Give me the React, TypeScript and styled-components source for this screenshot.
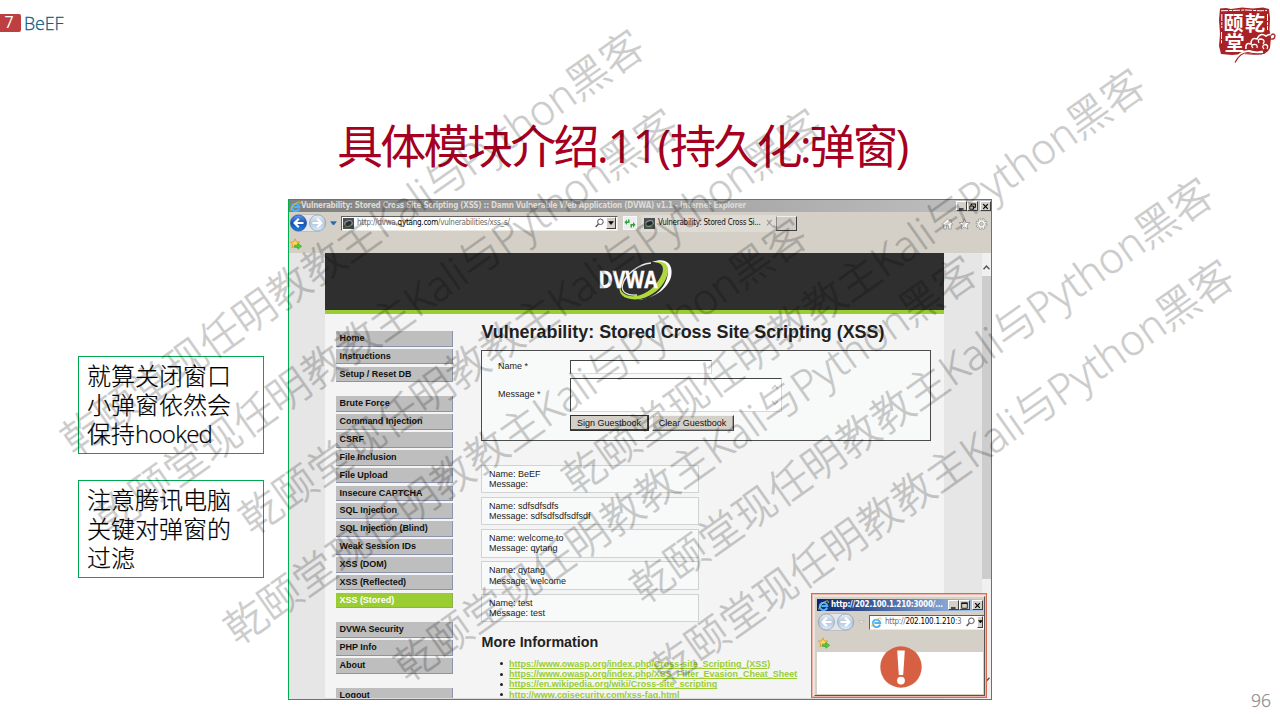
import React from 'react';
import styled, { createGlobalStyle, css } from 'styled-components';

const slideFont = `'Open Sans', 'Noto Sans CJK SC', sans-serif`;
const tahoma = `'DejaVu Sans Condensed', 'DejaVu Sans', sans-serif`;
const arial = `'Liberation Sans', Arial, sans-serif`;

const GlobalStyle = createGlobalStyle`
  *, *::before, *::after { box-sizing: border-box; }
  body { margin: 0; background: #fff; overflow: hidden; }
  h1, h2, p, ul { margin: 0; padding: 0; }
  svg { display: block; flex: none; }
`;

/* ---------- slide ---------- */

const Slide = styled.div`
  position: relative;
  width: 1280px;
  height: 720px;
  overflow: hidden;
  display: flex;
  flex-direction: column;
  background: #fff;
  font-family: ${slideFont};
`;

const Header = styled.header`
  height: 64px;
  display: flex;
  justify-content: space-between;
  align-items: flex-start;
  padding: 6px 3px 0 0;
`;

const Crumb = styled.div`
  display: flex;
  align-items: center;
  gap: 3px;
  margin-top: 8px;
  height: 18px;
`;

const ChapterBadge = styled.span`
  width: 21px;
  height: 18px;
  padding-right: 3px;
  border-radius: 0 2px 2px 0;
  background: #be3f3f;
  color: #fff;
  font-size: 16px;
  line-height: 17px;
  text-align: center;
`;

const ChapterName = styled.span`
  color: #0d5f86;
  font-size: 17.8px;
  line-height: 16px;
  margin-top: -1px;
  letter-spacing: -0.1px;
  font-weight: 300;
  -webkit-text-stroke: 0.3px #0d5f86;
`;

const Title = styled.h1`
  height: 135px;
  padding: 51px 0 0 337px;
  color: #a50021;
  font-size: 46px;
  line-height: 60px;
  font-weight: 400;
  letter-spacing: -2.7px;
  white-space: nowrap;
`;

const Digits = styled.span`
  letter-spacing: -1.3px;
`;

const Main = styled.main`
  display: flex;
  align-items: flex-start;
  padding-left: 78px;
  gap: 24px;
`;

const Notes = styled.aside`
  width: 186px;
  padding-top: 157px;
  display: flex;
  flex-direction: column;
  gap: 26px;
`;

const Note = styled.p`
  height: 98px;
  padding: 4px 8px;
  border: 1px solid #00a84f;
  font-size: 24px;
  line-height: 29px;
  font-weight: 300;
  color: #000;
  -webkit-text-stroke: 0.2px #000;
  white-space: nowrap;
`;

const NoteLatin = styled.span`
  letter-spacing: -0.7px;
`;

const PageNumber = styled.footer`
  align-self: flex-end;
  margin: -10px 9px 0 0;
  color: #8b8b8b;
  font-size: 17.5px;
  line-height: 20px;
  font-weight: 300;
  -webkit-text-stroke: 0.25px #8b8b8b;
`;

/* ---------- browser window ---------- */

const Browser = styled.section`
  position: relative;
  width: 704px;
  height: 501px;
  border: 1px solid #00b050;
  display: flex;
  flex-direction: column;
  overflow: hidden;
  background: #d4d0c8;
`;

const TitleBar = styled.div<{ $active?: boolean }>`
  flex: none;
  height: 12px;
  display: flex;
  align-items: center;
  padding-left: 1px;
  font: bold 8px/12px ${tahoma};
  white-space: nowrap;
  ${(p) =>
    p.$active
      ? css`
          gap: 2px;
          background: linear-gradient(90deg, #0a246a, #a6caf0);
          color: #fff;
          letter-spacing: -0.19px;
        `
      : css`
          background: linear-gradient(90deg, #808080, #c0c0c0);
          color: #dedbd4;
          letter-spacing: -0.24px;
        `}
`;

const WindowButtons = styled.div`
  margin-left: auto;
  display: flex;
`;

const WindowButton = styled.span<{ $gap?: boolean }>`
  width: 11px;
  height: 10px;
  margin-left: ${(p) => (p.$gap ? 2 : 0)}px;
  background: #d4d0c8;
  border: 1px solid;
  border-color: #fff #404040 #404040 #fff;
  display: grid;
  place-items: center;
`;

const ToolRow = styled.div`
  flex: none;
  height: 22px;
  display: flex;
  align-items: center;
`;

const HistoryArrow = styled.span`
  margin: 0 0 0 3px;
`;

const LinksBar = styled.div`
  flex: none;
  height: 19px;
  display: flex;
  align-items: center;
  padding: 1px 0 0 1px;
`;

const AddressField = styled.div<{ $width: number; $ml: number }>`
  width: ${(p) => p.$width}px;
  height: 15px;
  flex: none;
  margin-left: ${(p) => p.$ml}px;
  padding: 0 1px;
  display: flex;
  align-items: center;
  gap: 3px;
  background: #fff;
  border: 1px solid;
  border-color: #606060 #ece9e2 #ece9e2 #606060;
  font: 8px/12px ${tahoma};
  letter-spacing: -0.24px;
  color: #6b6b6b;
  white-space: nowrap;
  overflow: hidden;
`;

const Host = styled.span`
  color: #000;
`;

const FieldEnd = styled.span`
  margin-left: auto;
  display: flex;
  align-items: center;
  gap: 2px;
`;

const DropButton = styled.span<{ $width: number }>`
  width: ${(p) => p.$width}px;
  height: 12px;
  background: #d4d0c8;
  border: 1px solid;
  border-color: #fff #404040 #404040 #fff;
  display: grid;
  place-items: center;
`;

const RefreshButton = styled.span`
  width: 14px;
  height: 14px;
  margin-left: 5px;
  background: #eceef2;
  border: 1px solid #f8f8f8;
  display: grid;
  place-items: center;
`;

const Tab = styled.div`
  width: 135px;
  height: 17px;
  margin-left: 4px;
  padding-left: 3px;
  display: flex;
  align-items: center;
  gap: 3px;
  background: #dedbd4;
  font: 8px/12px ${tahoma};
  letter-spacing: -0.24px;
  color: #111;
  white-space: nowrap;
`;

const TabClose = styled.span`
  margin-left: 2px;
  color: #8d8a85;
  font-size: 10px;
`;

const NewTab = styled.span`
  width: 21px;
  height: 15px;
  background: #d0ccc4;
  border: 1px solid;
  border-color: #eee #404040 #404040 #8a8a8a;
`;

const CommandIcons = styled.div`
  margin-left: auto;
  padding: 2px 3px 0 0;
  display: flex;
  gap: 4px;
`;

/* ---------- page shown in the browser ---------- */

const Viewport = styled.div`
  flex: 1;
  min-height: 0;
  display: grid;
  grid-template-columns: 36px 619px 38px 9px;
  background: #e6e6e6;
`;

const Page = styled.div`
  grid-column: 2;
  min-height: 0;
  overflow: hidden;
  background: #f4f4f4;
  border-bottom: 1px solid #dcdcdc;
`;

const Scrollbar = styled.div`
  grid-column: 4;
  display: flex;
  flex-direction: column;
  justify-content: space-between;
  background: #f0f0f0;
`;

const ScrollArrow = styled.span`
  height: 23px;
  display: flex;
  align-items: center;
  justify-content: center;
  padding-top: 6px;
`;

const ScrollEnd = styled(ScrollArrow)`
  height: 36px;
  padding: 0 0 4px;
`;

const ScrollThumb = styled.span`
  height: 303px;
  margin-bottom: auto;
  background: #cdcdcd;
`;

const Banner = styled.div`
  height: 61px;
  background: #2f2f2f;
  border-bottom: 4px solid #9acd32;
  padding: 5px 0 0 270px;
`;

const Columns = styled.div`
  display: flex;
  font-family: ${arial};
`;

const Menu = styled.nav`
  width: 117px;
  margin: 17px 0 0 10.5px;
  display: flex;
  flex-direction: column;
  gap: 11.9px;
`;

const MenuGroup = styled.div`
  display: flex;
  flex-direction: column;
`;

const MenuItem = styled.a<{ $current?: boolean }>`
  height: 15.6px;
  margin-bottom: 2.26px;
  padding-left: 4px;
  border: 1px solid;
  border-width: 0 1px 1px 0;
  border-color: ${(p) => (p.$current ? '#8fb04a' : '#8d93ac')};
  background: ${(p) => (p.$current ? '#9acd32' : '#bebebe')};
  color: ${(p) => (p.$current ? '#fff' : '#111')};
  font-size: 9px;
  letter-spacing: -0.03px;
  font-weight: 700;
  line-height: 15px;
  white-space: nowrap;
`;

const Article = styled.div`
  width: 450px;
  margin-left: 28.5px;
  padding-top: 7px;
  color: #222;
  font-size: 9px;
`;

const PageHeading = styled.h1`
  padding-left: 0.5px;
  font-size: 17.9px;
  line-height: 22px;
  white-space: nowrap;
`;

const Form = styled.form`
  height: 91px;
  margin-top: 7px;
  padding: 9px 0 0 16px;
  border: 1px solid #4c4c4c;
  background: #f8faf9;
  display: grid;
  grid-template-columns: 72px auto;
  grid-template-rows: 14px 34px 16px;
  row-gap: 3.5px;
  align-content: start;
  align-items: center;
  white-space: nowrap;
`;

const FieldLabel = styled.span`
  padding-bottom: 2px;
`;

const Field = styled.span<{ $width: number; $height: number }>`
  width: ${(p) => p.$width}px;
  height: ${(p) => p.$height}px;
  background: #fff;
  border: 1px solid;
  border-color: #444 #ddd8d0 #ddd8d0 #444;
  display: flex;
  flex-direction: column;
  justify-content: space-around;
  align-items: flex-end;
  padding-right: 2px;
`;

const Buttons = styled.div`
  grid-column: 2;
  display: flex;
  gap: 3px;
`;

const Button = styled.span<{ $width: number; $default?: boolean }>`
  width: ${(p) => p.$width}px;
  height: 16px;
  border: 1px solid;
  border-color: ${(p) => (p.$default ? '#333' : '#f4f2ee #404040 #555 #f4f2ee')};
  box-shadow: inset -1px -1px 0 ${(p) => (p.$default ? '#444' : '#a09d96')};
  background: #d4d0c8;
  color: #111;
  font-size: 9px;
  line-height: 14px;
  text-align: center;
  padding-right: 1px;
`;

const Entries = styled.div`
  margin-top: 23.5px;
  display: flex;
  flex-direction: column;
  gap: 3.6px;
`;

const Entry = styled.div`
  width: 218px;
  height: 28.7px;
  padding: 3px 7px;
  border: 1px solid #d0d3d3;
  background: #f8fafa;
  line-height: 10.4px;
`;

const SubHeading = styled.h2`
  margin-top: 11px;
  padding-left: 0.5px;
  font-size: 14.3px;
  line-height: 18px;
`;

const Links = styled.ul`
  margin-top: 7.5px;
  list-style: none;
`;

const LinkItem = styled.li`
  height: 10.3px;
  display: flex;
  align-items: center;
  gap: 6px;
  padding-left: 19px;
  line-height: 10.3px;
  white-space: nowrap;
  &::before {
    content: '';
    width: 3px;
    height: 3px;
    border-radius: 50%;
    background: #222;
  }
`;

const LinkText = styled.a`
  color: #9acd32;
  font-weight: 700;
  letter-spacing: -0.025px;
  text-decoration: underline;
`;

/* ---------- popup window ---------- */

const PopupFrame = styled.div`
  position: absolute;
  right: 4px;
  bottom: 1px;
  width: 176px;
  height: 105px;
  padding: 2px 1px 1px 2px;
  border: 1px solid #d96a50;
  box-shadow: inset 0 0 0 1px #f0b5a6;
  background: #eceae6;
`;

const Popup = styled.div`
  height: 100%;
  padding: 2px 1px 1px 2px;
  border: 1px solid;
  border-color: #e8e5de #555 #555 #e8e5de;
  background: #d4d0c8;
  display: flex;
  flex-direction: column;
  overflow: hidden;
`;

const PopupBody = styled.div`
  flex: 1;
  padding-left: 2px;
  background: #fff;
  display: flex;
  justify-content: center;
`;

const AlertMark = styled.div`
  position: relative;
  top: -6px;
`;

const WatermarkText = styled.div<{ $x: number; $y: number }>`
  position: absolute;
  left: ${(p) => p.$x - 399}px;
  top: ${(p) => p.$y - 29}px;
  width: 800px;
  height: 60px;
  transform: rotate(-35.2deg);
  text-align: center;
  font-size: 42px;
  line-height: 60px;
  font-weight: 300;
  color: #000;
  -webkit-text-stroke: 0.6px #000;
  opacity: 0.2;
  white-space: nowrap;
  pointer-events: none;
`;

/* ---------- drawings ---------- */

const IeIcon = ({ size = 11 }: { size?: number }) => (
  <svg width={size} height={size} viewBox="0 0 16 16" fill="none">
    <path d="M13.2 11A5.400 5.400 0 1 1 13.400 8.600H5" stroke="#4fb2f4" strokeWidth="3" />
    <path d="M1.600 14.600C-.6 12.500 6 3.500 12 1.600c3-.9 3.500.8 2.600 2.700" stroke="#f2c03a" strokeWidth="1.300" />
  </svg>
);

const SiteIcon = () => (
  <svg width="11" height="11" viewBox="0 0 11 11">
    <rect width="11" height="11" fill="#4b5257" />
    <ellipse cx="5.500" cy="5.500" rx="3.800" ry="2.700" transform="rotate(-25 5.500 5.500)" fill="#2c3033" stroke="#9aa4a4" strokeWidth="1" />
    <path d="M2 7.500Q5.500 9.800 9 6" fill="none" stroke="#6f9a3e" strokeWidth=".8" />
  </svg>
);

const NavButtons = ({ disabled }: { disabled?: boolean }) => (
  <svg width="38" height="20" viewBox="0 0 38 20">
    <defs>
      <linearGradient id="navBlue" x1="0" y1="0" x2="0" y2="1">
        <stop offset="0" stopColor="#5d9bea" />
        <stop offset=".5" stopColor="#1550b8" />
        <stop offset="1" stopColor="#1c82e0" />
      </linearGradient>
      <linearGradient id="navPale" x1="0" y1="0" x2="0" y2="1">
        <stop offset="0" stopColor="#e9eff6" />
        <stop offset=".5" stopColor="#b4c8de" />
        <stop offset="1" stopColor="#d8ecfa" />
      </linearGradient>
    </defs>
    <rect x="1" y="1.500" width="36" height="17" rx="8.500" fill="#e3e5e8" stroke="#a7acb3" strokeWidth=".6" />
    <circle cx="9.500" cy="10" r="8" fill={disabled ? 'url(#navPale)' : 'url(#navBlue)'} stroke={disabled ? '#8d9cae' : '#274a86'} strokeWidth=".7" />
    <circle cx="28.500" cy="10" r="8" fill="url(#navPale)" stroke="#8d9cae" strokeWidth=".7" />
    <g fill="none" stroke="#fff" strokeWidth="2.200">
      <path d="M14.500 10H6M9.800 5.800L5.600 10l4.200 4.200" />
      <path d="M23.500 10H32M28.200 5.800L32.400 10l-4.200 4.200" />
    </g>
  </svg>
);

const Triangle = ({ color, size = 6, hollow }: { color: string; size?: number; hollow?: boolean }) => (
  <svg width={size} height={size * 0.7} viewBox="0 0 10 7">
    <path d="M1 1H9L5 6Z" fill={hollow ? '#e8e6e0' : color} stroke={color} strokeWidth="1" />
  </svg>
);

const SearchIcon = () => (
  <svg width="9" height="10" viewBox="0 0 9 10" fill="none" stroke="#555">
    <circle cx="5.400" cy="3.800" r="2.800" strokeWidth="1" />
    <path d="M3.400 6L.6 9" strokeWidth="1.300" />
  </svg>
);

const FavoriteAdd = () => (
  <svg width="12" height="12" viewBox="0 0 12 12">
    <path d="M5 .8l1.300 3 3.400.3-2.500 2.200.7 3.400L5 7.900 2 9.700l.7-3.400L.3 4.100l3.300-.3z" fill="#fbd85a" stroke="#d8962a" strokeWidth=".8" />
    <path d="M4.600 7.200h3.300V5.400L11.600 8.300 7.900 11.200V9.400H4.600z" fill="#4fd03c" stroke="#2f9a28" strokeWidth=".6" />
  </svg>
);

const RefreshIcon = () => (
  <svg width="12" height="11" viewBox="0 0 12 11" fill="#2fa52f">
    <path d="M.5 4.200L3 1.500V3.400h1V1.600h1.500V4.900H3V7z" />
    <path d="M11.500 6.800L9 9.500V7.600H8V9.400H6.500V6.100H9V4z" />
  </svg>
);

const MinimizeGlyph = () => (
  <svg width="7" height="7" viewBox="0 0 7 7"><path d="M1 6h4.500" stroke="#000" strokeWidth="1.300" /></svg>
);
const RestoreGlyph = () => (
  <svg width="7" height="7" viewBox="0 0 7 7" fill="none" stroke="#000" strokeWidth=".9">
    <path d="M2.300 2.500V1h4v3.200H5" strokeWidth="1.100" /><path d="M.8 3h3.700v3.200H.8z" />
  </svg>
);
const MaximizeGlyph = () => (
  <svg width="7" height="7" viewBox="0 0 7 7" fill="none" stroke="#000"><path d="M.7 1h5.600v5.300H.7z" strokeWidth=".8" /><path d="M.5 1.200h6" strokeWidth="1.200" /></svg>
);
const CloseGlyph = () => (
  <svg width="7" height="7" viewBox="0 0 7 7" stroke="#000" strokeWidth="1.200"><path d="M1.200 1.200l4.600 4.600M5.800 1.200L1.200 5.800" /></svg>
);

const HomeIcon = () => (
  <svg width="13" height="12" viewBox="0 0 13 12" fill="#fff" stroke="#8f8c86" strokeWidth=".8">
    <path d="M6.500 1L1 6.300l.9.9.9-.7V11h2.500V7.700h2.400V11h2.500V6.500l.9.700.9-.9-2-1.900V1.800H8.700v1.300z" />
  </svg>
);
const StarIcon = () => (
  <svg width="13" height="12" viewBox="0 0 13 12" fill="#fff" stroke="#8f8c86" strokeWidth=".8">
    <path d="M6.500.8l1.500 3.600 4 .3-3 2.500.9 3.900-3.400-2.100-3.400 2.100L4 7.200 1 4.700l4-.3z" />
  </svg>
);
const GearIcon = () => (
  <svg width="13" height="12" viewBox="0 0 13 12">
    <circle cx="6.500" cy="6" r="4.600" fill="none" stroke="#8f8c86" strokeWidth="2.600" strokeDasharray="2.200 1.413" />
    <circle cx="6.500" cy="6" r="3.900" fill="#fff" stroke="#8f8c86" strokeWidth=".5" />
    <circle cx="6.500" cy="6" r="4.500" fill="none" stroke="#fff" strokeWidth="1.500" strokeDasharray="1.200 2.334" strokeDashoffset="-.5" />
    <circle cx="6.500" cy="6" r="1.800" fill="#d4d0c8" stroke="#8f8c86" strokeWidth=".7" />
  </svg>
);

const Chevron = ({ down }: { down?: boolean }) => (
  <svg width="7" height="5" viewBox="0 0 7 5" fill="none" stroke="#555" strokeWidth="1.500">
    <path d={down ? 'M.5 .8L3.500 3.900 6.500 .8' : 'M.5 4.200L3.500 1.100 6.500 4.200'} />
  </svg>
);

const FieldChevron = ({ down }: { down?: boolean }) => (
  <svg width="8" height="6" viewBox="0 0 8 6" fill="none" stroke="#c9c9c9" strokeWidth="1.200">
    <path d={down ? 'M1 1L4 4.500 7 1' : 'M1 5L4 1.500 7 5'} />
  </svg>
);

const DvwaLogo = () => (
  <svg width="80" height="48" viewBox="0 0 80 48">
    <path d="M57 4C70-1 79 5 76 19 72 33 54 43 38 42 56 43 68 33 72 20 75 9 69 3 57 4Z" fill="#fff" />
    <path d="M25 27C22 37 31 43 45 41 60 38 72 25 73 13 74 6 68 2 58 4 66 4 70 8 67 16 62 28 51 37 41 38 31 39 25 35 25 27Z" fill="#b0d940" />
    <path d="M56 5C43 6 30 17 27.500 27 26 34 32 38 42 37" fill="none" stroke="#e8e8e8" strokeWidth="1.300" />
    <text x="3.500" y="30" fill="#fff" stroke="#fff" strokeWidth=".4" fontFamily="'Open Sans', sans-serif" fontSize="24" fontWeight="700" textLength="59" lengthAdjust="spacingAndGlyphs">DVWA</text>
  </svg>
);

const SealLogo = () => (
  <svg width="60" height="58" viewBox="0 0 60 58">
    <path d="M3 2.500L9 2 14 3 25 1.500 36 2.500 46 1.500 52 3 53 12 52.500 24 54 31 53 42Q50 49 40 49L26 48 15 49 4 48 2 40 3 28 2 14Z" fill="#a82225" />
    <path d="M4 4.800L14 4.500 29 4 43 4.800 50 4.500M4.800 8V22M4.500 26V38M50.500 8V24" fill="none" stroke="#fff" strokeWidth="1" strokeDasharray="7 1.200 3 .8" />
    <g fill="#fff" fontFamily="'Noto Sans CJK SC', sans-serif" fontWeight="700" fontSize="20">
      <text x="6.500" y="24.500">颐</text>
      <text x="28" y="24.500">乾</text>
      <text x="7.500" y="45">堂</text>
    </g>
    <path d="M29 43Q28 36 34 38 34 31 40 33 43 26 49 30 55 26 57.500 31" fill="none" stroke="#fff" strokeWidth="1.600" />
    <path d="M36 42Q33 39 37 38.500 41 38 40 42M42 37Q40 33 44 33 49 34 46 38M47 43Q44 40 48 38.500 52 39 50 43" fill="none" stroke="#fff" strokeWidth="1.300" />
    <path d="M53 33Q58 34 58 29.500 56 26.500 54 29.500" fill="none" stroke="#a82225" strokeWidth="1.300" />
    <path d="M18 56Q23 45.500 32 45.500 40 48 46 46" fill="none" stroke="#fff" strokeWidth="3" />
    <path d="M18 56.500Q23 46.500 31 46.500 40 49 48 47" fill="none" stroke="#a82225" strokeWidth="1.200" />
  </svg>
);

const AlertIcon = () => (
  <svg width="42" height="42" viewBox="0 0 42 42">
    <circle cx="21" cy="21" r="20.700" fill="#d86042" />
    <path d="M17.200 4.500H24.800L23.200 29H18.800Z" fill="#fff" />
    <circle cx="21" cy="34.600" r="3.900" fill="#fff" />
  </svg>
);

/* ---------- data ---------- */

const menuGroups = [
  ['Home', 'Instructions', 'Setup / Reset DB'],
  [
    'Brute Force', 'Command Injection', 'CSRF', 'File Inclusion', 'File Upload', 'Insecure CAPTCHA',
    'SQL Injection', 'SQL Injection (Blind)', 'Weak Session IDs', 'XSS (DOM)', 'XSS (Reflected)', 'XSS (Stored)',
  ],
  ['DVWA Security', 'PHP Info', 'About'],
  ['Logout'],
];

const guestbook = [
  ['BeEF', ''],
  ['sdfsdfsdfs', 'sdfsdfsdfsdfsdf'],
  ['welcome to', 'qytang'],
  ['qytang', 'welcome'],
  ['test', 'test'],
];

const links = [
  'https://www.owasp.org/index.php/Cross-site_Scripting_(XSS)',
  'https://www.owasp.org/index.php/XSS_Filter_Evasion_Cheat_Sheet',
  'https://en.wikipedia.org/wiki/Cross-site_scripting',
  'http://www.cgisecurity.com/xss-faq.html',
];

const watermarks = [
  [350.5, 241], [384.5, 320], [528.5, 320], [514, 430],
  [683.5, 467], [851.5, 280], [919.5, 388.5], [941, 470.5],
];

const PopupWindow = () => (
  <PopupFrame>
    <Popup>
      <TitleBar $active>
        <IeIcon />
        http://202.100.1.210:3000/...
        <WindowButtons>
          <WindowButton><MinimizeGlyph /></WindowButton>
          <WindowButton><MaximizeGlyph /></WindowButton>
          <WindowButton $gap><CloseGlyph /></WindowButton>
        </WindowButtons>
      </TitleBar>
      <ToolRow>
        <NavButtons disabled />
        <HistoryArrow><Triangle color="#b5b2ab" size={7} hollow /></HistoryArrow>
        <AddressField $width={116} $ml={4}>
          <IeIcon />
          <span>http://<Host>202.100.1.210</Host>:3</span>
          <FieldEnd>
            <SearchIcon />
            <DropButton $width={6}><Triangle color="#000" size={5} /></DropButton>
          </FieldEnd>
        </AddressField>
      </ToolRow>
      <LinksBar><FavoriteAdd /></LinksBar>
      <PopupBody>
        <AlertMark><AlertIcon /></AlertMark>
      </PopupBody>
    </Popup>
  </PopupFrame>
);

const DvwaPage = () => (
  <Page>
    <Banner><DvwaLogo /></Banner>
    <Columns>
      <Menu>
        {menuGroups.map((group) => (
          <MenuGroup key={group[0]}>
            {group.map((label) => (
              <MenuItem key={label} $current={label === 'XSS (Stored)'}>{label}</MenuItem>
            ))}
          </MenuGroup>
        ))}
      </Menu>
      <Article>
        <PageHeading>Vulnerability: Stored Cross Site Scripting (XSS)</PageHeading>
        <Form>
          <FieldLabel>Name *</FieldLabel>
          <Field $width={142} $height={14} />
          <FieldLabel>Message *</FieldLabel>
          <Field $width={212} $height={34}><FieldChevron /><FieldChevron down /></Field>
          <Buttons>
            <Button $width={79} $default>Sign Guestbook</Button>
            <Button $width={82}>Clear Guestbook</Button>
          </Buttons>
        </Form>
        <Entries>
          {guestbook.map(([name, message]) => (
            <Entry key={name}>
              <div>Name: {name}</div>
              <div>Message: {message}</div>
            </Entry>
          ))}
        </Entries>
        <SubHeading>More Information</SubHeading>
        <Links>
          {links.map((url) => (
            <LinkItem key={url}><LinkText>{url}</LinkText></LinkItem>
          ))}
        </Links>
      </Article>
    </Columns>
  </Page>
);

export default function App() {
  return (
    <Slide>
      <GlobalStyle />
      <Header>
        <Crumb>
          <ChapterBadge>7</ChapterBadge>
          <ChapterName>BeEF</ChapterName>
        </Crumb>
        <SealLogo />
      </Header>
      <Title>具体模块介绍<Digits>.11(</Digits>持久化:弹窗<Digits>)</Digits></Title>
      <Main>
        <Notes>
          <Note>就算关闭窗口<br />小弹窗依然会<br />保持<NoteLatin>hooked</NoteLatin></Note>
          <Note>注意腾讯电脑<br />关键对弹窗的<br />过滤</Note>
        </Notes>
        <Browser>
          <TitleBar>
            <IeIcon />
            Vulnerability: Stored Cross Site Scripting (XSS) :: Damn Vulnerable Web Application (DVWA) v1.1 - Internet Explorer
            <WindowButtons>
              <WindowButton><MinimizeGlyph /></WindowButton>
              <WindowButton><RestoreGlyph /></WindowButton>
              <WindowButton $gap><CloseGlyph /></WindowButton>
            </WindowButtons>
          </TitleBar>
          <ToolRow>
            <NavButtons />
            <HistoryArrow><Triangle color="#1c6cb4" size={7} /></HistoryArrow>
            <AddressField $width={277} $ml={4}>
              <SiteIcon />
              <span>http://dvwa.<Host>qytang.com</Host>/vulnerabilities/xss_s/</span>
              <FieldEnd>
                <SearchIcon />
                <DropButton $width={10}><Triangle color="#000" size={6} /></DropButton>
              </FieldEnd>
            </AddressField>
            <RefreshButton><RefreshIcon /></RefreshButton>
            <Tab>
              <SiteIcon />
              Vulnerability: Stored Cross Si...
              <TabClose>×</TabClose>
            </Tab>
            <NewTab />
            <CommandIcons><HomeIcon /><StarIcon /><GearIcon /></CommandIcons>
          </ToolRow>
          <LinksBar><FavoriteAdd /></LinksBar>
          <Viewport>
            <DvwaPage />
            <Scrollbar>
              <ScrollArrow><Chevron /></ScrollArrow>
              <ScrollThumb />
              <ScrollEnd><Chevron down /></ScrollEnd>
            </Scrollbar>
          </Viewport>
          <PopupWindow />
        </Browser>
      </Main>
      <PageNumber>96</PageNumber>
      {watermarks.map(([x, y]) => (
        <WatermarkText key={`${x}-${y}`} $x={x} $y={y}>乾颐堂现任明教教主Kali与Python黑客</WatermarkText>
      ))}
    </Slide>
  );
}
